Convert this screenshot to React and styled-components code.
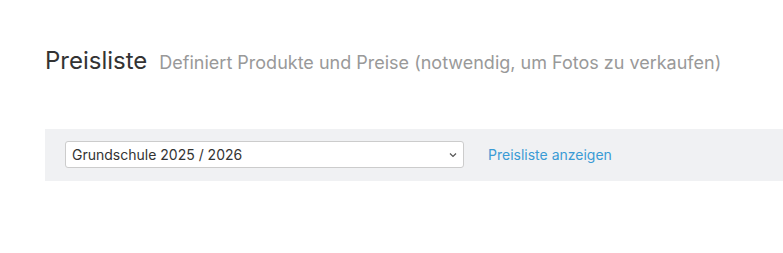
import React from "react";
import styled, { createGlobalStyle } from "styled-components";

const Global = createGlobalStyle`
  html, body { margin: 0; padding: 0; background: #fff; }
  body { font-family: Inter, "Noto Sans", sans-serif; color: #333; }
`;

const Page = styled.div`
  padding: 47px 0 0 45px;
`;

const Header = styled.div`
  display: flex;
  align-items: baseline;
  gap: 12px;
  margin: 0 0 53px;
`;

const Title = styled.h1`
  margin: 0;
  font-size: 24px;
  font-weight: 400;
  color: #333;
  line-height: 1.2;
`;

const Subtitle = styled.span`
  font-size: 18px;
  color: #999;
`;

const Toolbar = styled.div`
  display: flex;
  align-items: center;
  gap: 24px;
  background: #f0f1f3;
  padding: 12px 20px;
  height: 52px;
  box-sizing: border-box;
`;

const SelectWrap = styled.div`
  position: relative;
  width: 399px;
`;

const Select = styled.select`
  appearance: none;
  width: 100%;
  height: 27px;
  box-sizing: border-box;
  border: 1px solid #ccc;
  border-radius: 3px;
  background: #fff;
  font-family: Inter, "Noto Sans", sans-serif;
  font-size: 14px;
  color: #333;
  padding: 0 24px 0 6px;
  outline: none;
`;

const Chevron = styled.svg`
  position: absolute;
  right: 7px;
  top: 50%;
  transform: translateY(-50%);
  pointer-events: none;
`;

const Link = styled.a`
  font-size: 14px;
  color: #3a9bd5;
  text-decoration: none;
`;

export default function App() {
  return (
    <>
      <Global />
      <Page>
        <Header>
          <Title>Preisliste</Title>
          <Subtitle>Definiert Produkte und Preise (notwendig, um Fotos zu verkaufen)</Subtitle>
        </Header>
        <Toolbar>
          <SelectWrap>
            <Select defaultValue="gs">
              <option value="gs">Grundschule 2025 / 2026</option>
            </Select>
            <Chevron width="8" height="5" viewBox="0 0 8 5">
              <path d="M1 1l3 3 3-3" fill="none" stroke="#555" strokeWidth="1.2" />
            </Chevron>
          </SelectWrap>
          <Link href="#">Preisliste anzeigen</Link>
        </Toolbar>
      </Page>
    </>
  );
}
